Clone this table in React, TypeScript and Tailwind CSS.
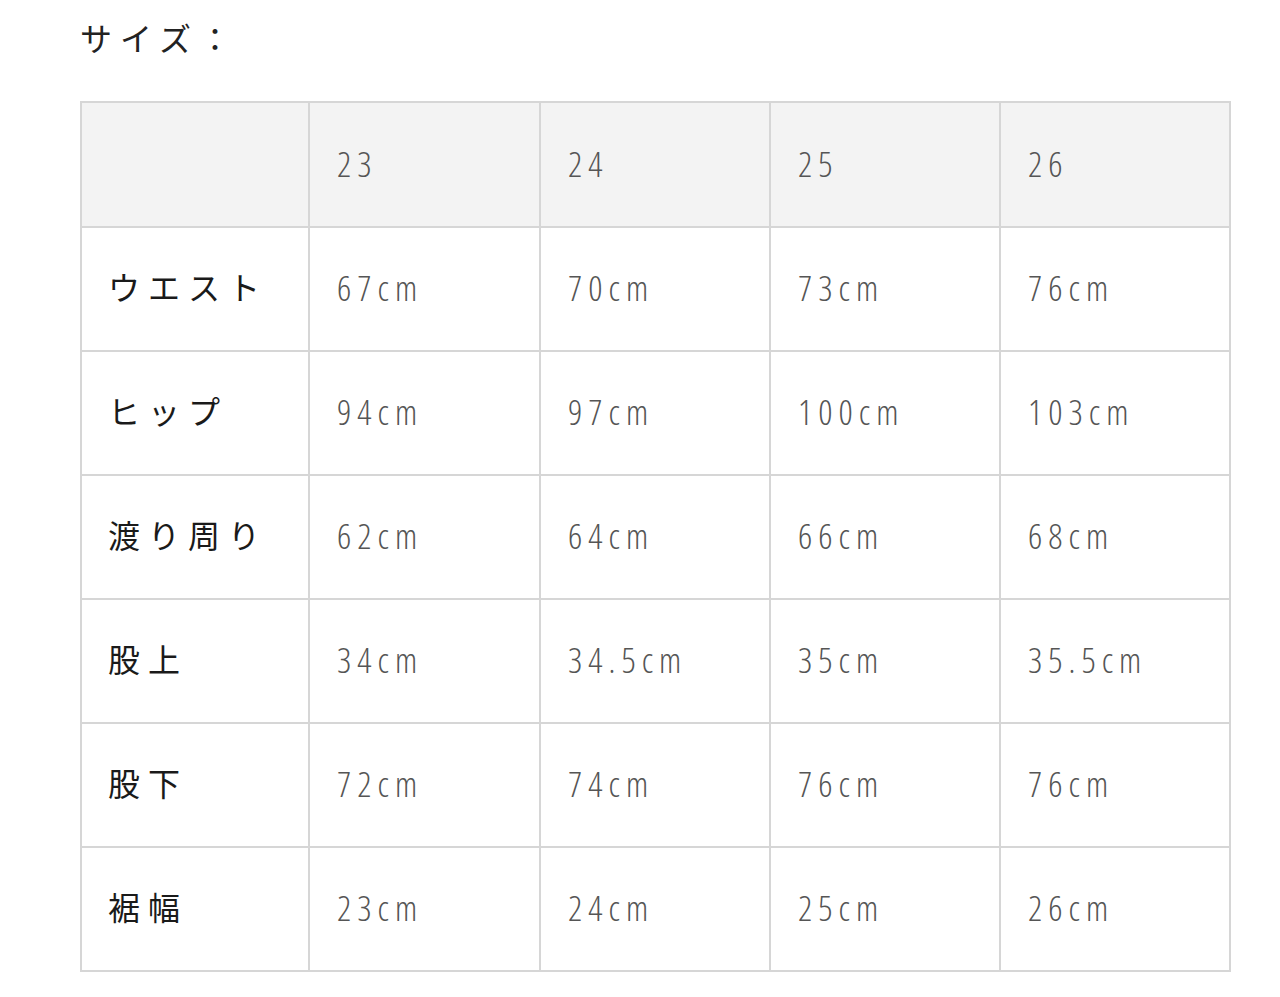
const sizes = ['23', '24', '25', '26'];

const rows: { label: string; values: string[] }[] = [
  { label: 'ウエスト', values: ['67cm', '70cm', '73cm', '76cm'] },
  { label: 'ヒップ', values: ['94cm', '97cm', '100cm', '103cm'] },
  { label: '渡り周り', values: ['62cm', '64cm', '66cm', '68cm'] },
  { label: '股上', values: ['34cm', '34.5cm', '35cm', '35.5cm'] },
  { label: '股下', values: ['72cm', '74cm', '76cm', '76cm'] },
  { label: '裾幅', values: ['23cm', '24cm', '25cm', '26cm'] },
];

const jp = { fontFamily: '"Noto Sans CJK JP", sans-serif' };
const num = { fontFamily: '"Open Sans", sans-serif', fontStretch: '75%', fontWeight: 300 };

export default function App() {
  return (
    <div className="min-h-screen bg-white pl-[80px] pt-[13px]">
      <h2 className="text-[32px] leading-[48px] tracking-[8px] font-normal text-[#222]" style={jp}>
        サイズ：
      </h2>
      <table className="mt-[40px] w-[1149px] table-fixed border-collapse border-2 border-[#d6d6d6]">
        <colgroup>
          <col className="w-[228px]" />
          <col className="w-[231px]" />
          <col className="w-[230px]" />
          <col className="w-[230px]" />
          <col className="w-[230px]" />
        </colgroup>
        <thead>
          <tr className="bg-[#f3f3f3]">
            <th className="h-[125px] border-2 border-[#d6d6d6]" />
            {sizes.map((s) => (
              <th
                key={s}
                className="h-[125px] border-2 border-[#d6d6d6] pl-[27px] text-left text-[35px] font-light tracking-[6px] text-[#555]"
                style={num}
              >
                {s}
              </th>
            ))}
          </tr>
        </thead>
        <tbody>
          {rows.map((r) => (
            <tr key={r.label}>
              <td className="h-[124px] border-2 border-[#d6d6d6] pl-[26px] pb-[6px] text-[32px] tracking-[8px] text-[#1a1a1a]" style={jp}>
                {r.label}
              </td>
              {r.values.map((v, i) => (
                <td
                  key={i}
                  className="h-[124px] border-2 border-[#d6d6d6] pl-[27px] pb-[2px] text-[35px] tracking-[6px] text-[#555]"
                  style={num}
                >
                  {v}
                </td>
              ))}
            </tr>
          ))}
        </tbody>
      </table>
    </div>
  );
}
